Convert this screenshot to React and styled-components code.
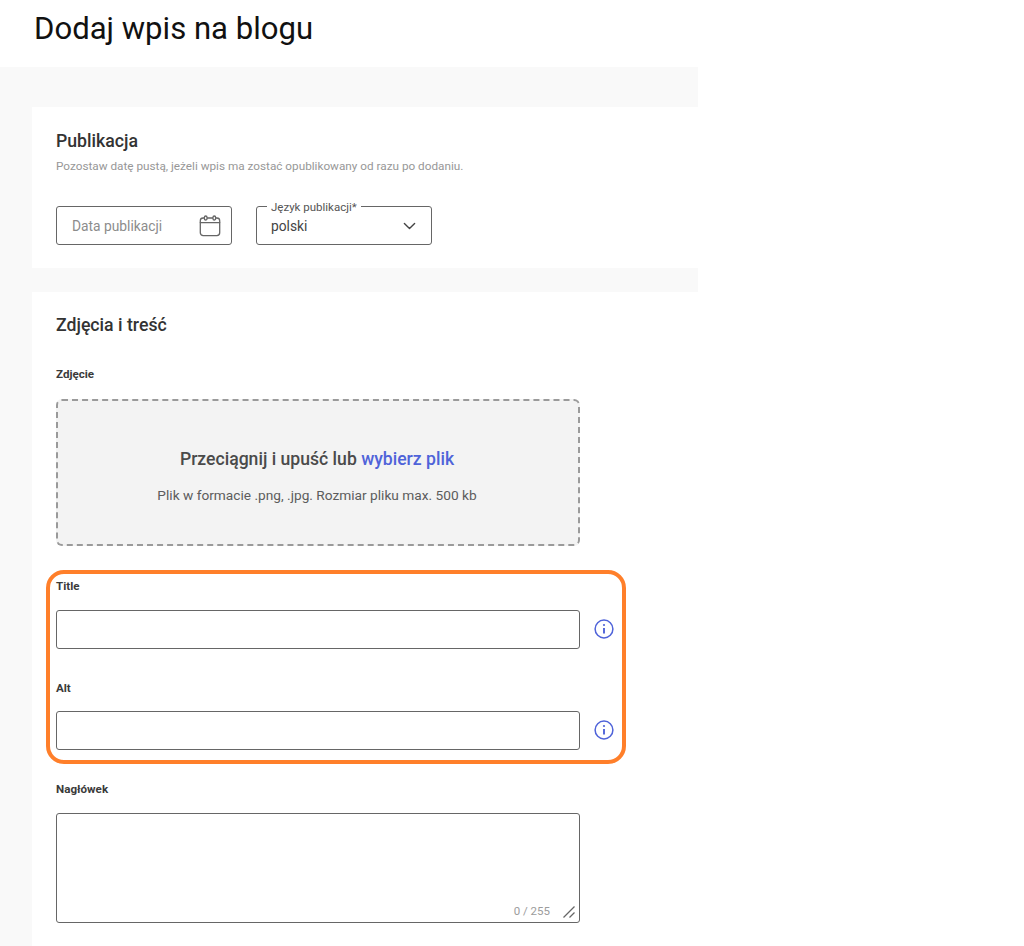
import React from "react";
import styled, { createGlobalStyle } from "styled-components";

const Global = createGlobalStyle`
  html, body { margin: 0; padding: 0; background: #fff; }
  body { font-family: Roboto, "Liberation Sans", sans-serif; color: #2f2f2f; }
`;
const Page = styled.div`
  position: relative;
  width: 1024px;
  height: 946px;
  overflow: hidden;
`;
const PageTitle = styled.h1`
  margin: 0;
  height: 67px;
  padding: 10px 0 0 34px;
  box-sizing: border-box;
  font-size: 31.1px;
  line-height: 38px;
  font-weight: 400;
  color: #111;
`;
const Panel = styled.main`
  width: 698px;
  height: 879px;
  box-sizing: border-box;
  padding: 40px 0 0 32px;
  background: #f9f9f9;
  display: flex;
  flex-direction: column;
  gap: 24px;
`;
const Card = styled.section`
  background: #fff;
  padding: ${p => p.$top}px 24px 0;
  height: ${p => p.$height}px;
  box-sizing: border-box;
  flex: none;
`;
const CardTitle = styled.h2`
  margin: 0;
  font-size: 17.7px;
  line-height: 24px;
  font-weight: 500;
  color: #333;
`;
const Hint = styled.p`
  margin: 5px 0 0;
  font-size: 11.75px;
  line-height: 16px;
  color: #979797;
`;
const Row = styled.div`
  display: flex;
  gap: 24px;
  margin-top: 32px;
`;
const Box = styled.div`
  position: relative;
  width: 176px;
  height: 39px;
  box-sizing: border-box;
  border: 1px solid #666;
  border-radius: 3px;
  padding: 0 ${p => p.$right}px 0 ${p => p.$left}px;
  display: flex;
  align-items: center;
  justify-content: space-between;
  font-size: 13.8px;
  color: ${p => p.$muted ? "#8c8c8c" : "#444"};
`;
const Legend = styled.span`
  position: absolute;
  top: -7px;
  left: 10px;
  padding: 0 4px;
  background: #fff;
  font-size: 11.5px;
  line-height: 14px;
  color: #555;
`;
const FieldLabel = styled.label`
  display: block;
  font-size: 11.6px;
  line-height: 14px;
  font-weight: 700;
  color: #3a3a3a;
  margin-top: ${p => p.$top}px;
`;
const Drop = styled.div`
  margin-top: 18px;
  width: 524px;
  height: 147px;
  box-sizing: border-box;
  border: 2px dashed #9a9a9a;
  border-radius: 6px;
  background: #f3f3f3;
  display: flex;
  flex-direction: column;
  align-items: center;
  padding: 47px 2px 0 0;
`;
const DropTitle = styled.div`
  font-size: 17.6px;
  line-height: 22px;
  font-weight: 500;
  color: #4a4a4a;
`;
const DropLink = styled.span`
  color: #4f63d9;
`;
const DropHint = styled.div`
  margin-top: 17px;
  font-size: 13.7px;
  line-height: 16px;
  color: #5c5c5c;
`;
const InputRow = styled.div`
  display: flex;
  align-items: center;
  gap: 14px;
  margin-top: ${p => p.$top}px;
`;
const TextInput = styled.div`
  width: 524px;
  height: 39px;
  box-sizing: border-box;
  border: 1px solid #666;
  border-radius: 3px;
  background: #fff;
`;
const TextArea = styled.div`
  position: relative;
  margin-top: 17px;
  width: 524px;
  height: 110px;
  box-sizing: border-box;
  border: 1px solid #666;
  border-radius: 3px;
`;
const Counter = styled.span`
  position: absolute;
  right: 29px;
  bottom: 4px;
  font-size: 11.5px;
  line-height: 14px;
  color: #9c9c9c;
`;
const Grip = styled.svg`
  position: absolute;
  right: 3px;
  bottom: 3px;
`;
const InfoSvg = styled.svg`
  margin-bottom: 1px;
`;
const Highlight = styled.div`
  position: absolute;
  left: 46px;
  top: 570px;
  width: 580px;
  height: 194px;
  box-sizing: border-box;
  border: 4px solid #ff7f2a;
  border-radius: 18px;
`;

const CalendarIcon = () => (
  <svg width="22" height="22" viewBox="0 0 22 22" fill="none" stroke="#666" strokeWidth="1.3" strokeLinecap="round">
    <rect x="1.3" y="3" width="19.4" height="17.6" rx="2.8" />
    <path d="M1.3 7.6h19.4" />
    <rect x="5.4" y="1" width="2.6" height="4" rx="1.3" fill="#fff" />
    <rect x="14" y="1" width="2.6" height="4" rx="1.3" fill="#fff" />
  </svg>
);
const ChevronIcon = () => (
  <svg width="13" height="8" viewBox="0 0 14 8" fill="none" stroke="#444" strokeWidth="1.5" strokeLinecap="round" strokeLinejoin="round">
    <path d="M1.5 1.2 7 6.6l5.5-5.4" />
  </svg>
);
const InfoIcon = () => (
  <InfoSvg width="20" height="20" viewBox="0 0 20 20" fill="none" stroke="#4f63d9">
    <circle cx="10" cy="10" r="8.9" strokeWidth="1.5" />
    <path d="M10 9v5.5" strokeWidth="1.9" />
    <circle cx="10" cy="6" r="1.1" fill="#4f63d9" stroke="none" />
  </InfoSvg>
);

export default function App() {
  return (
    <Page>
      <Global />
      <PageTitle>Dodaj wpis na blogu</PageTitle>
      <Panel>
        <Card $top={22} $height={161}>
          <CardTitle>Publikacja</CardTitle>
          <Hint>Pozostaw datę pustą, jeżeli wpis ma zostać opublikowany od razu po dodaniu.</Hint>
          <Row>
            <Box $muted $left={15} $right={10}>Data publikacji<CalendarIcon /></Box>
            <Box $left={14} $right={15}>
              <Legend>Język publikacji*</Legend>
              polski
              <ChevronIcon />
            </Box>
          </Row>
        </Card>
        <Card $top={21} $height={654}>
          <CardTitle>Zdjęcia i treść</CardTitle>
          <FieldLabel $top={30}>Zdjęcie</FieldLabel>
          <Drop>
            <DropTitle>Przeciągnij i upuść lub <DropLink>wybierz plik</DropLink></DropTitle>
            <DropHint>Plik w formacie .png, .jpg. Rozmiar pliku max. 500 kb</DropHint>
          </Drop>
          <FieldLabel $top={33}>Title</FieldLabel>
          <InputRow $top={17}><TextInput /><InfoIcon /></InputRow>
          <FieldLabel $top={32}>Alt</FieldLabel>
          <InputRow $top={16}><TextInput /><InfoIcon /></InputRow>
          <FieldLabel $top={32}>Nagłówek</FieldLabel>
          <TextArea>
            <Counter>0 / 255</Counter>
            <Grip width="14" height="14" viewBox="0 0 14 14" stroke="#666" strokeWidth="1.3" fill="none">
              <path d="M1.5 12.5 12.5 1.5M7.5 12.5l5-5" />
            </Grip>
          </TextArea>
        </Card>
      </Panel>
      <Highlight />
    </Page>
  );
}
